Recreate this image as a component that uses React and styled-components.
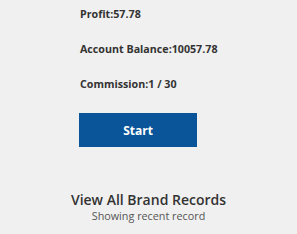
import React from 'react';
import styled, { createGlobalStyle } from 'styled-components';

const GlobalStyle = createGlobalStyle`
	html, body {
		margin: 0;
		padding: 0;
		background: #f0f0f0;
	}
	body {
		font-family: 'Open Sans', 'Liberation Sans', sans-serif;
		color: #333;
	}
`;

const Page = styled.div`
	width: 297px;
	height: 234px;
	display: flex;
	flex-direction: column;
	background: #f0f0f0;
	overflow: hidden;
`;

const Stats = styled.div`
	display: flex;
	flex-direction: column;
	gap: 20px;
	padding: 7px 0 0 80px;
`;

const StatLine = styled.div`
	font-size: 10.7px;
	font-weight: 700;
	line-height: 15px;
	color: #333;
`;

const StartButton = styled.button`
	width: 118px;
	height: 34px;
	margin: 21px 0 0 79px;
	border: none;
	background: #0a5599;
	color: #fff;
	font-family: inherit;
	font-size: 12px;
	font-weight: 700;
	cursor: pointer;
`;

const Records = styled.div`
	display: flex;
	flex-direction: column;
	align-items: center;
	margin-top: 44px;
`;

const RecordsTitle = styled.div`
	font-size: 14px;
	font-weight: 600;
	line-height: 18px;
	color: #333;
`;

const RecordsSub = styled.div`
	font-size: 10.8px;
	line-height: 13px;
	color: #555;
`;

const App = () => {
	return (
		<Page>
			<GlobalStyle />
			<Stats>
				<StatLine>Profit:57.78</StatLine>
				<StatLine>Account Balance:10057.78</StatLine>
				<StatLine>Commission:1 / 30</StatLine>
			</Stats>
			<StartButton>Start</StartButton>
			<Records>
				<RecordsTitle>View All Brand Records</RecordsTitle>
				<RecordsSub>Showing recent record</RecordsSub>
			</Records>
		</Page>
	);
};

export default App;
